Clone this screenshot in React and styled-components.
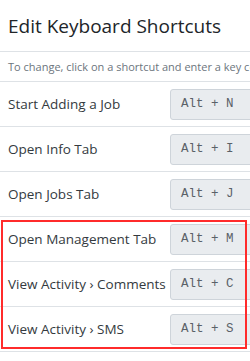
import React from "react";
import styled, { createGlobalStyle } from "styled-components";

const Global = createGlobalStyle`
  html, body { margin: 0; padding: 0; background: #fff; }
  body { font-family: "Open Sans", "Noto Sans", sans-serif; overflow: hidden; }
`;

const Panel = styled.div`
  width: 250px;
  height: 361px;
  overflow: hidden;
  background: #fff;
`;

const Header = styled.div`
  height: 52px;
  box-sizing: border-box;
  padding: 0 8px;
  display: flex;
  align-items: center;
  border-bottom: 1px solid #dee2e6;
`;

const Title = styled.h5`
  margin: 0;
  font-size: 19px;
  font-weight: 500;
  color: #212529;
  white-space: nowrap;
`;

const Hint = styled.div`
  height: 30px;
  box-sizing: border-box;
  padding: 0 8px;
  display: flex;
  align-items: center;
  font-size: 11px;
  color: #6c757d;
  white-space: nowrap;
  overflow: hidden;
  border-bottom: 1px solid #dee2e6;
`;

const Group = styled.div`
  position: relative;
  &::after {
    content: "";
    position: absolute;
    inset: 3px 3px 3px 1px;
    border: 2px solid #ff2b2b;
    pointer-events: none;
  }
`;

const Row = styled.div`
  height: 45px;
  box-sizing: border-box;
  display: flex;
  align-items: center;
  padding-left: 8px;
  border-bottom: 1px solid #dee2e6;
`;

const Label = styled.div`
  flex: 0 0 162px;
  font-size: 13.5px;
  color: #343a40;
  white-space: nowrap;
`;

const Key = styled.div`
  flex: 0 0 auto;
  width: 100px;
  height: 31px;
  box-sizing: border-box;
  display: flex;
  align-items: center;
  padding-left: 10px;
  background: #e9ecef;
  border: 1px solid #ced4da;
  border-radius: 3px;
  font-family: "Liberation Mono", "DejaVu Sans Mono", monospace;
  font-size: 12.5px;
  color: #5a6168;
  white-space: pre;
`;

const plain = [
  ["Start Adding a Job", "Alt + N"],
  ["Open Info Tab", "Alt + I"],
  ["Open Jobs Tab", "Alt + J"],
];
const highlighted = [
  ["Open Management Tab", "Alt + M"],
  ["View Activity \u203A Comments", "Alt + C"],
  ["View Activity \u203A SMS", "Alt + S"],
];

const ShortcutRow = ({ label, keys }) => (
  <Row>
    <Label>{label}</Label>
    <Key>{keys}</Key>
  </Row>
);

export default function App() {
  return (
    <Panel>
      <Global />
      <Header>
        <Title>Edit Keyboard Shortcuts</Title>
      </Header>
      <Hint>To change, click on a shortcut and enter a key combination.</Hint>
      {plain.map(([l, k]) => (
        <ShortcutRow key={l} label={l} keys={k} />
      ))}
      <Group>
        {highlighted.map(([l, k]) => (
          <ShortcutRow key={l} label={l} keys={k} />
        ))}
      </Group>
    </Panel>
  );
}
